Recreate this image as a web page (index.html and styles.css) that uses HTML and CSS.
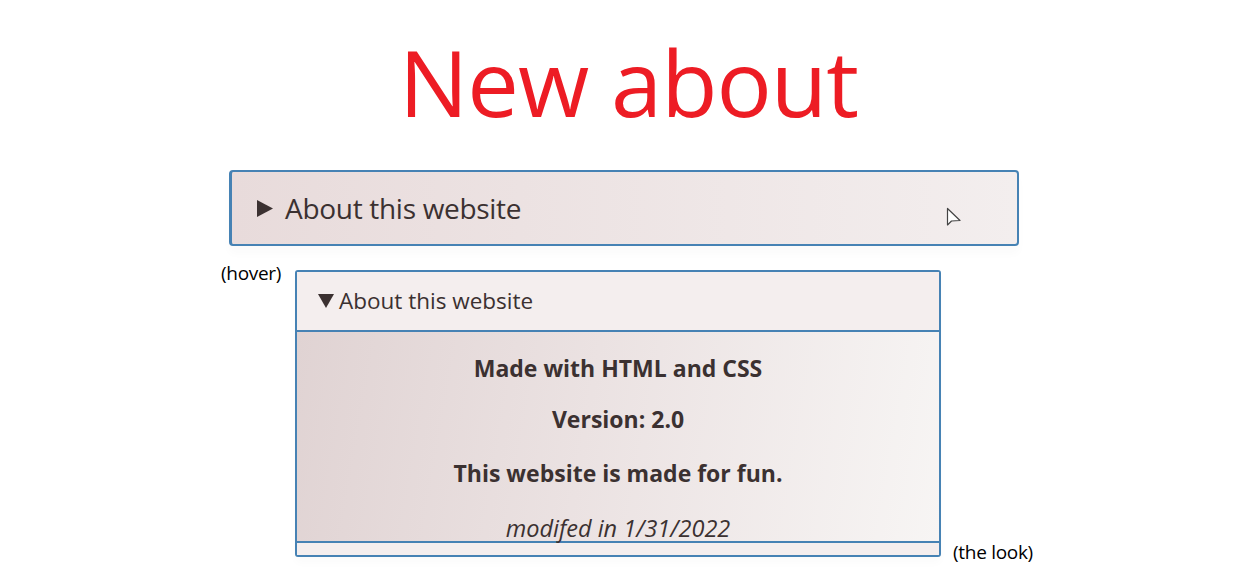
FILE: index.html
```html
<!DOCTYPE html>
<html>
<head>
<meta charset="utf-8">
<link rel="stylesheet" href="styles.css">
</head>
<body>
<h1 class="title">New about</h1>
<div class="first-row">
  <div class="box-closed">
    <svg class="tri-right" width="16" height="17" viewBox="0 0 16 17"><polygon points="0,0 16,8.5 0,17" fill="#3b3131"/></svg>
    <span class="closed-label">About this website</span>
    <svg class="cursor" width="16" height="22" viewBox="0 0 16 22"><path d="M1.5 1.5 L1.5 18 L5.5 14 L14 13.5 Z" fill="#fff" stroke="#444" stroke-width="1.2" stroke-linejoin="round"/></svg>
  </div>
</div>
<div class="second-row">
  <span class="note">(hover)</span>
  <div class="box-open">
    <div class="summary">
      <svg class="tri-down" width="16" height="14" viewBox="0 0 16 14"><polygon points="0,0 16,0 8,14" fill="#3b3131"/></svg>
      <span class="open-label">About this website</span>
    </div>
    <div class="content">
      <p class="line">Made with HTML and CSS</p>
      <p class="line">Version: 2.0</p>
      <p class="line">This website is made for fun.</p>
      <p class="mod">modifed in 1/31/2022</p>
    </div>
    <div class="foot"></div>
  </div>
  <span class="note note-end">(the look)</span>
</div>
</body>
</html>
```

FILE: styles.css
```css
html, body {
  margin: 0;
  padding: 0;
  background: #ffffff;
}
body {
  font-family: "Open Sans", "Noto Sans", sans-serif;
  color: #3b3131;
  width: 1257px;
  min-height: 577px;
}
.title {
  margin: 0;
  padding-top: 35px;
  height: 170px;
  box-sizing: border-box;
  font-size: 92px;
  font-weight: 400;
  line-height: 94px;
  color: #ed1c24;
  text-align: center;
  letter-spacing: -1px;
}
.first-row {
  padding-left: 229px;
  height: 100px;
}
.box-closed {
  position: relative;
  width: 790px;
  height: 76px;
  box-sizing: border-box;
  border: 2px solid #4682b4;
  border-left-width: 3px;
  border-radius: 4px;
  background: linear-gradient(90deg, #e8dbdb 0%, #f3eeee 100%);
  display: flex;
  align-items: center;
  padding-left: 25px;
  box-shadow: 0 8px 8px rgba(0,0,0,0.02);
}
.tri-right {
  margin-right: 12px;
  margin-top: 1px;
}
.closed-label {
  font-size: 28px;
  line-height: 30px;
  letter-spacing: -0.3px;
}
.cursor {
  position: absolute;
  left: 714px;
  top: 35px;
}
.second-row {
  display: flex;
  align-items: flex-start;
  padding-left: 221px;
  padding-bottom: 20px;
}
.note {
  font-size: 19px;
  line-height: 22px;
  color: #000;
  margin-top: -8px;
  width: 74px;
  letter-spacing: -0.3px;
}
.note-end {
  align-self: flex-end;
  margin-top: 0;
  margin-bottom: -6px;
  margin-left: 12px;
  width: auto;
}
.box-open {
  width: 646px;
  box-sizing: border-box;
  border: 2px solid #4682b4;
  border-radius: 3px;
  background: #f4eeee;
  box-shadow: 0 6px 8px rgba(0,0,0,0.02);
}
.summary {
  height: 60px;
  box-sizing: border-box;
  border-bottom: 2px solid #4682b4;
  display: flex;
  align-items: center;
  padding-left: 21px;
  background: #f4eeee;
}
.tri-down {
  margin-right: 5px;
  margin-top: 0px;
}
.open-label {
  font-size: 22.5px;
  line-height: 26px;
  letter-spacing: 0;
}
.content {
  height: 211px;
  box-sizing: border-box;
  border-bottom: 2px solid #4682b4;
  background: linear-gradient(100deg, #e0d3d3 0%, #ebe2e2 45%, #f7f5f4 100%);
  text-align: center;
  padding-top: 21px;
}
.line {
  margin: 0;
  font-weight: 700;
  font-size: 23px;
  line-height: 30px;
  letter-spacing: 0;
}
.line + .line {
  margin-top: 21px;
}
.line:nth-child(3) {
  margin-top: 24px;
}
.mod {
  margin: 25px 0 0;
  font-style: italic;
  font-size: 23.5px;
  line-height: 30px;
  letter-spacing: 0;
}
.foot {
  height: 12px;
  background: #f4eeee;
}
```
